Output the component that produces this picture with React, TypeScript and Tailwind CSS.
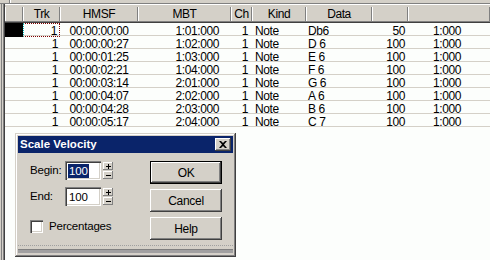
import React from 'react';

const rows = [
    ['00:00:00:00', '1:01:000', 'Db6', '50'],
    ['00:00:00:27', '1:02:000', 'D 6', '100'],
    ['00:00:01:25', '1:03:000', 'E 6', '100'],
    ['00:00:02:21', '1:04:000', 'F 6', '100'],
    ['00:00:03:14', '2:01:000', 'G 6', '100'],
    ['00:00:04:07', '2:02:000', 'A 6', '100'],
    ['00:00:04:28', '2:03:000', 'B 6', '100'],
    ['00:00:05:17', '2:04:000', 'C 7', '100'],
];

const headers = ['', 'Trk', 'HMSF', 'MBT', 'Ch', 'Kind', 'Data', '', ''];

const cols = 'grid grid-cols-[18px_37px_78px_93px_21px_54px_66px_36px_1fr]';

function SpinButtons() {
    return (
        <div className="flex flex-col gap-[1px] ml-[2px]">
            <div className="w-[10px] h-[8px] bg-[#d4d0c8] shadow-[inset_-1px_-1px_#808080,inset_1px_1px_#ffffff] flex items-center justify-center">
                <svg width="5" height="5" viewBox="0 0 5 5">
                    <path d="M2 0h1v5H2zM0 2h5v1H0z" fill="black" />
                </svg>
            </div>
            <div className="w-[10px] h-[8px] bg-[#d4d0c8] shadow-[inset_-1px_-1px_#808080,inset_1px_1px_#ffffff] flex items-center justify-center">
                <div className="w-[5px] h-[1px] bg-black" />
            </div>
        </div>
    );
}

function WinButton({ label, isDefault }: { label: string; isDefault?: boolean }) {
    return (
        <div
            className={
                'w-[72px] h-[23px] bg-[#d4d0c8] flex items-center justify-center text-[12px] tracking-[-0.3px] ' +
                (isDefault
                    ? 'shadow-[inset_0_0_0_1px_#000000,inset_-2px_-2px_#404040,inset_2px_2px_#ffffff,inset_-3px_-3px_#808080]'
                    : 'shadow-[inset_-1px_-1px_#404040,inset_1px_1px_#ffffff,inset_-2px_-2px_#808080,inset_2px_2px_#d4d0c8]')
            }
        >
            {label}
        </div>
    );
}

function NumberBox({ selected }: { selected?: boolean }) {
    return (
        <div className="flex items-center">
            <div className="w-[36px] h-[19px] bg-white shadow-[inset_1px_1px_#808080,inset_2px_2px_#404040,inset_-1px_-1px_#ffffff,inset_-2px_-2px_#d4d0c8] flex items-center pl-[3px]">
                <span className={selected ? 'bg-[#0a246a] text-white px-[1px] leading-[14px]' : 'px-[1px] leading-[14px]'}>100</span>
            </div>
            <SpinButtons />
        </div>
    );
}

export default function App() {
    return (
        <div className="relative w-[490px] h-[260px] overflow-hidden bg-[#fcfefc] text-black text-[11px] font-['Liberation_Sans',Arial,sans-serif]">
            {/* toolbar remnant */}
            <div className="h-[3px] bg-[#d4d0c8] flex">
                <div className="w-[9px]" />
                <div className="w-[1px] bg-[#808080]" />
                <div className="w-[1px] bg-white" />
            </div>
            <div className="h-[1px] bg-[#808080]" />
            <div className="flex h-[256px]">
                {/* left frame */}
                <div className="flex h-full">
                    <div className="w-[1px] bg-[#d4d0c8]" />
                    <div className="w-[1px] bg-[#808080]" />
                    <div className="w-[1px] bg-[#d4d0c8]" />
                    <div className="w-[1px] bg-[#808080]" />
                    <div className="w-[1px] bg-[#404040]" />
                </div>
                <div className="flex-1 flex flex-col text-[12px] tracking-[-0.4px]">
                    <div className="h-[1px] bg-white" />
                    <div className="h-[2px] bg-[#d4d0c8]" />
                    {/* header */}
                    <div className={cols + ' h-[14px]'}>
                        {headers.map((h, i) => (
                            <div
                                key={i}
                                className="bg-[#d4d0c8] border-l border-white border-r border-r-[#808080] text-center leading-[13px] pt-[1px]"
                            >
                                {h}
                            </div>
                        ))}
                    </div>
                    <div className="h-[1px] bg-[#808080]" />
                    <div className="h-[1px] bg-[#404040]" />
                    {/* rows */}
                    {rows.map((r, i) => (
                        <div key={i} className={cols + ' h-[13px] border-b border-[#d4d0c8] leading-[12px]'}>
                            <div className={i === 0 ? 'bg-black' : ''} />
                            <div
                                className={
                                    'text-right pr-[2px] pt-[2px] ' +
                                    (i === 0 ? 'border border-dotted border-[#800000] border-l-[#00c0c0] pr-[1px] pt-[1px] leading-[10px]' : '')
                                }
                            >
                                1
                            </div>
                            <div className="text-center pt-[2px]">{r[0]}</div>
                            <div className="text-right pr-[12px] pt-[2px]">{r[1]}</div>
                            <div className="text-right pr-[4px] pt-[2px]">1</div>
                            <div className="pl-[3px] pt-[2px]">Note</div>
                            <div className="pl-[2px] pt-[2px]">{r[2]}</div>
                            <div className="text-right pr-[3px] pt-[2px]">{r[3]}</div>
                            <div className="pl-[25px] pt-[2px]">1:000</div>
                        </div>
                    ))}
                </div>
            </div>

            {/* Scale Velocity dialog */}
            <div className="absolute left-[15px] top-[133px] w-[221px] h-[124px] bg-[#d4d0c8] p-[3px] flex flex-col shadow-[inset_-1px_-1px_#404040,inset_1px_1px_#d4d0c8,inset_-2px_-2px_#808080,inset_2px_2px_#ffffff]">
                <div className="h-[17px] bg-[#0a246a] flex items-center justify-between pl-[2px] pr-[2px]">
                    <span className="text-white font-bold text-[11.5px]">Scale Velocity</span>
                    <div className="w-[16px] h-[13px] bg-[#d4d0c8] shadow-[inset_-1px_-1px_#404040,inset_1px_1px_#ffffff,inset_-2px_-2px_#808080] flex items-center justify-center">
                        <svg width="8" height="7" viewBox="0 0 8 7">
                            <path d="M0 0h2l2 2 2-2h2L5 3.5 8 7H6L4 5 2 7H0l3-3.5z" fill="black" />
                        </svg>
                    </div>
                </div>
                <div className="flex-1 flex justify-between pl-[12px] pr-[11px] pt-[8px] text-[11.5px] tracking-[-0.2px]">
                    <div className="flex flex-col">
                        <div className="flex items-center h-[19px]">
                            <span className="w-[35px]">Begin:</span>
                            <NumberBox selected />
                        </div>
                        <div className="flex items-center h-[19px] mt-[7px]">
                            <span className="w-[35px]">End:</span>
                            <NumberBox />
                        </div>
                        <div className="flex items-center mt-[12px]">
                            <div className="w-[13px] h-[13px] bg-white shadow-[inset_1px_1px_#808080,inset_2px_2px_#404040,inset_-1px_-1px_#ffffff,inset_-2px_-2px_#d4d0c8]" />
                            <span className="ml-[6px]">Percentages</span>
                        </div>
                    </div>
                    <div className="flex flex-col gap-[5px]">
                        <WinButton label="OK" isDefault />
                        <WinButton label="Cancel" />
                        <WinButton label="Help" />
                    </div>
                </div>
                <div className="h-[1px] border-t border-dotted border-[#a0a0a0]" />
                <div className="h-[3px]" />
                <div className="h-[4px] bg-[#a0a0a0] border-t border-[#808080]" />
                <div className="h-[1px]" />
            </div>
        </div>
    );
}
